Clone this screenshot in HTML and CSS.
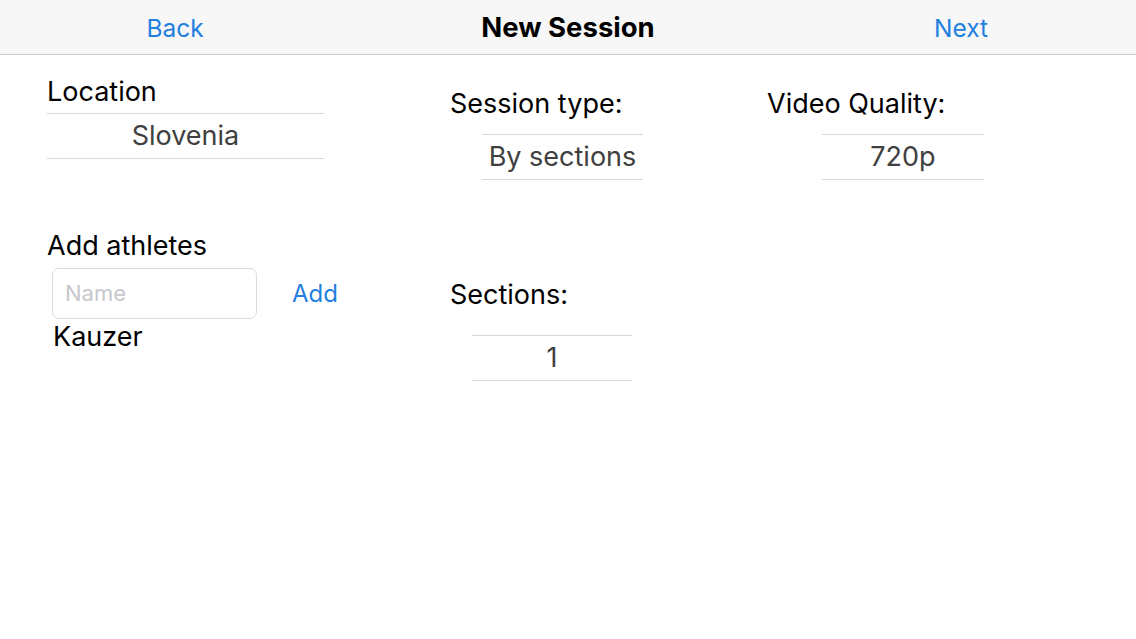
FILE: index.html
```html
<!DOCTYPE html>
<html>
<head>
<meta charset="utf-8">
<link rel="stylesheet" href="styles.css">
</head>
<body>
<header class="navbar">
  <span class="nav-btn nav-back">Back</span>
  <span class="nav-title">New Session</span>
  <span class="nav-btn nav-next">Next</span>
</header>
<main class="content">
  <section class="col col-left">
    <div class="label label-location">Location</div>
    <div class="picker picker-location">Slovenia</div>
    <div class="label label-athletes">Add athletes</div>
    <div class="add-row">
      <div class="name-input">Name</div>
      <span class="add-btn">Add</span>
    </div>
    <div class="athlete">Kauzer</div>
  </section>
  <section class="col col-mid">
    <div class="label label-type">Session type:</div>
    <div class="picker picker-type">By sections</div>
    <div class="label label-sections">Sections:</div>
    <div class="picker picker-sections">1</div>
  </section>
  <section class="col col-right">
    <div class="label label-quality">Video Quality:</div>
    <div class="picker picker-quality">720p</div>
  </section>
</main>
</body>
</html>
```

FILE: styles.css
```css
* { box-sizing: border-box; }
html, body { margin: 0; padding: 0; background: #fff; }
body {
  width: 1136px;
  height: 639px;
  overflow: hidden;
  font-family: "Inter", "Liberation Sans", sans-serif;
  color: #000;
}
.navbar {
  height: 55px;
  background: #f7f7f7;
  border-bottom: 1px solid #c8c8c8;
  display: grid;
  grid-template-columns: 350px 436px 350px;
  align-items: center;
}
.nav-btn {
  color: #1f80e0;
  font-size: 24.5px;
  text-align: center;
  padding-top: 2px;
}
.nav-title {
  text-align: center;
  font-weight: 700;
  font-size: 27.5px;
}
.content {
  display: flex;
  padding-left: 47px;
}
.col { display: flex; flex-direction: column; align-items: flex-start; }
.col-left { width: 403px; }
.col-mid { width: 317px; }
.col-right { flex: 1; }
.label {
  font-size: 27px;
  line-height: 32px;
}
.picker {
  font-size: 27px;
  color: #404040;
  text-align: center;
  height: 46px;
  line-height: 44px;
  border-top: 1px solid #d8d8d8;
  border-bottom: 1px solid #d8d8d8;
}
.label-location { margin-top: 21px; }
.picker-location { width: 277px; margin-top: 5px; }
.label-athletes { margin-top: 71px; }
.add-row { display: flex; align-items: center; margin-top: 6px; margin-left: 5px; }
.name-input {
  width: 205px;
  height: 51px;
  border: 1px solid #dcdcdc;
  border-radius: 7px;
  font-size: 22px;
  color: #c7c7cd;
  padding-left: 12px;
  line-height: 49px;
}
.add-btn { color: #1f80e0; font-size: 24px; margin-left: 35px; }
.athlete { font-size: 27px; margin-left: 6px; line-height: 32px; margin-top: 2px; }
.label-type, .label-quality { margin-top: 33px; }
.picker-type { width: 161px; margin-left: 32px; margin-top: 14px; }
.picker-quality { width: 162px; margin-left: 55px; margin-top: 14px; }
.label-sections { margin-top: 99px; }
.picker-sections { width: 160px; margin-left: 22px; margin-top: 24px; }
```
